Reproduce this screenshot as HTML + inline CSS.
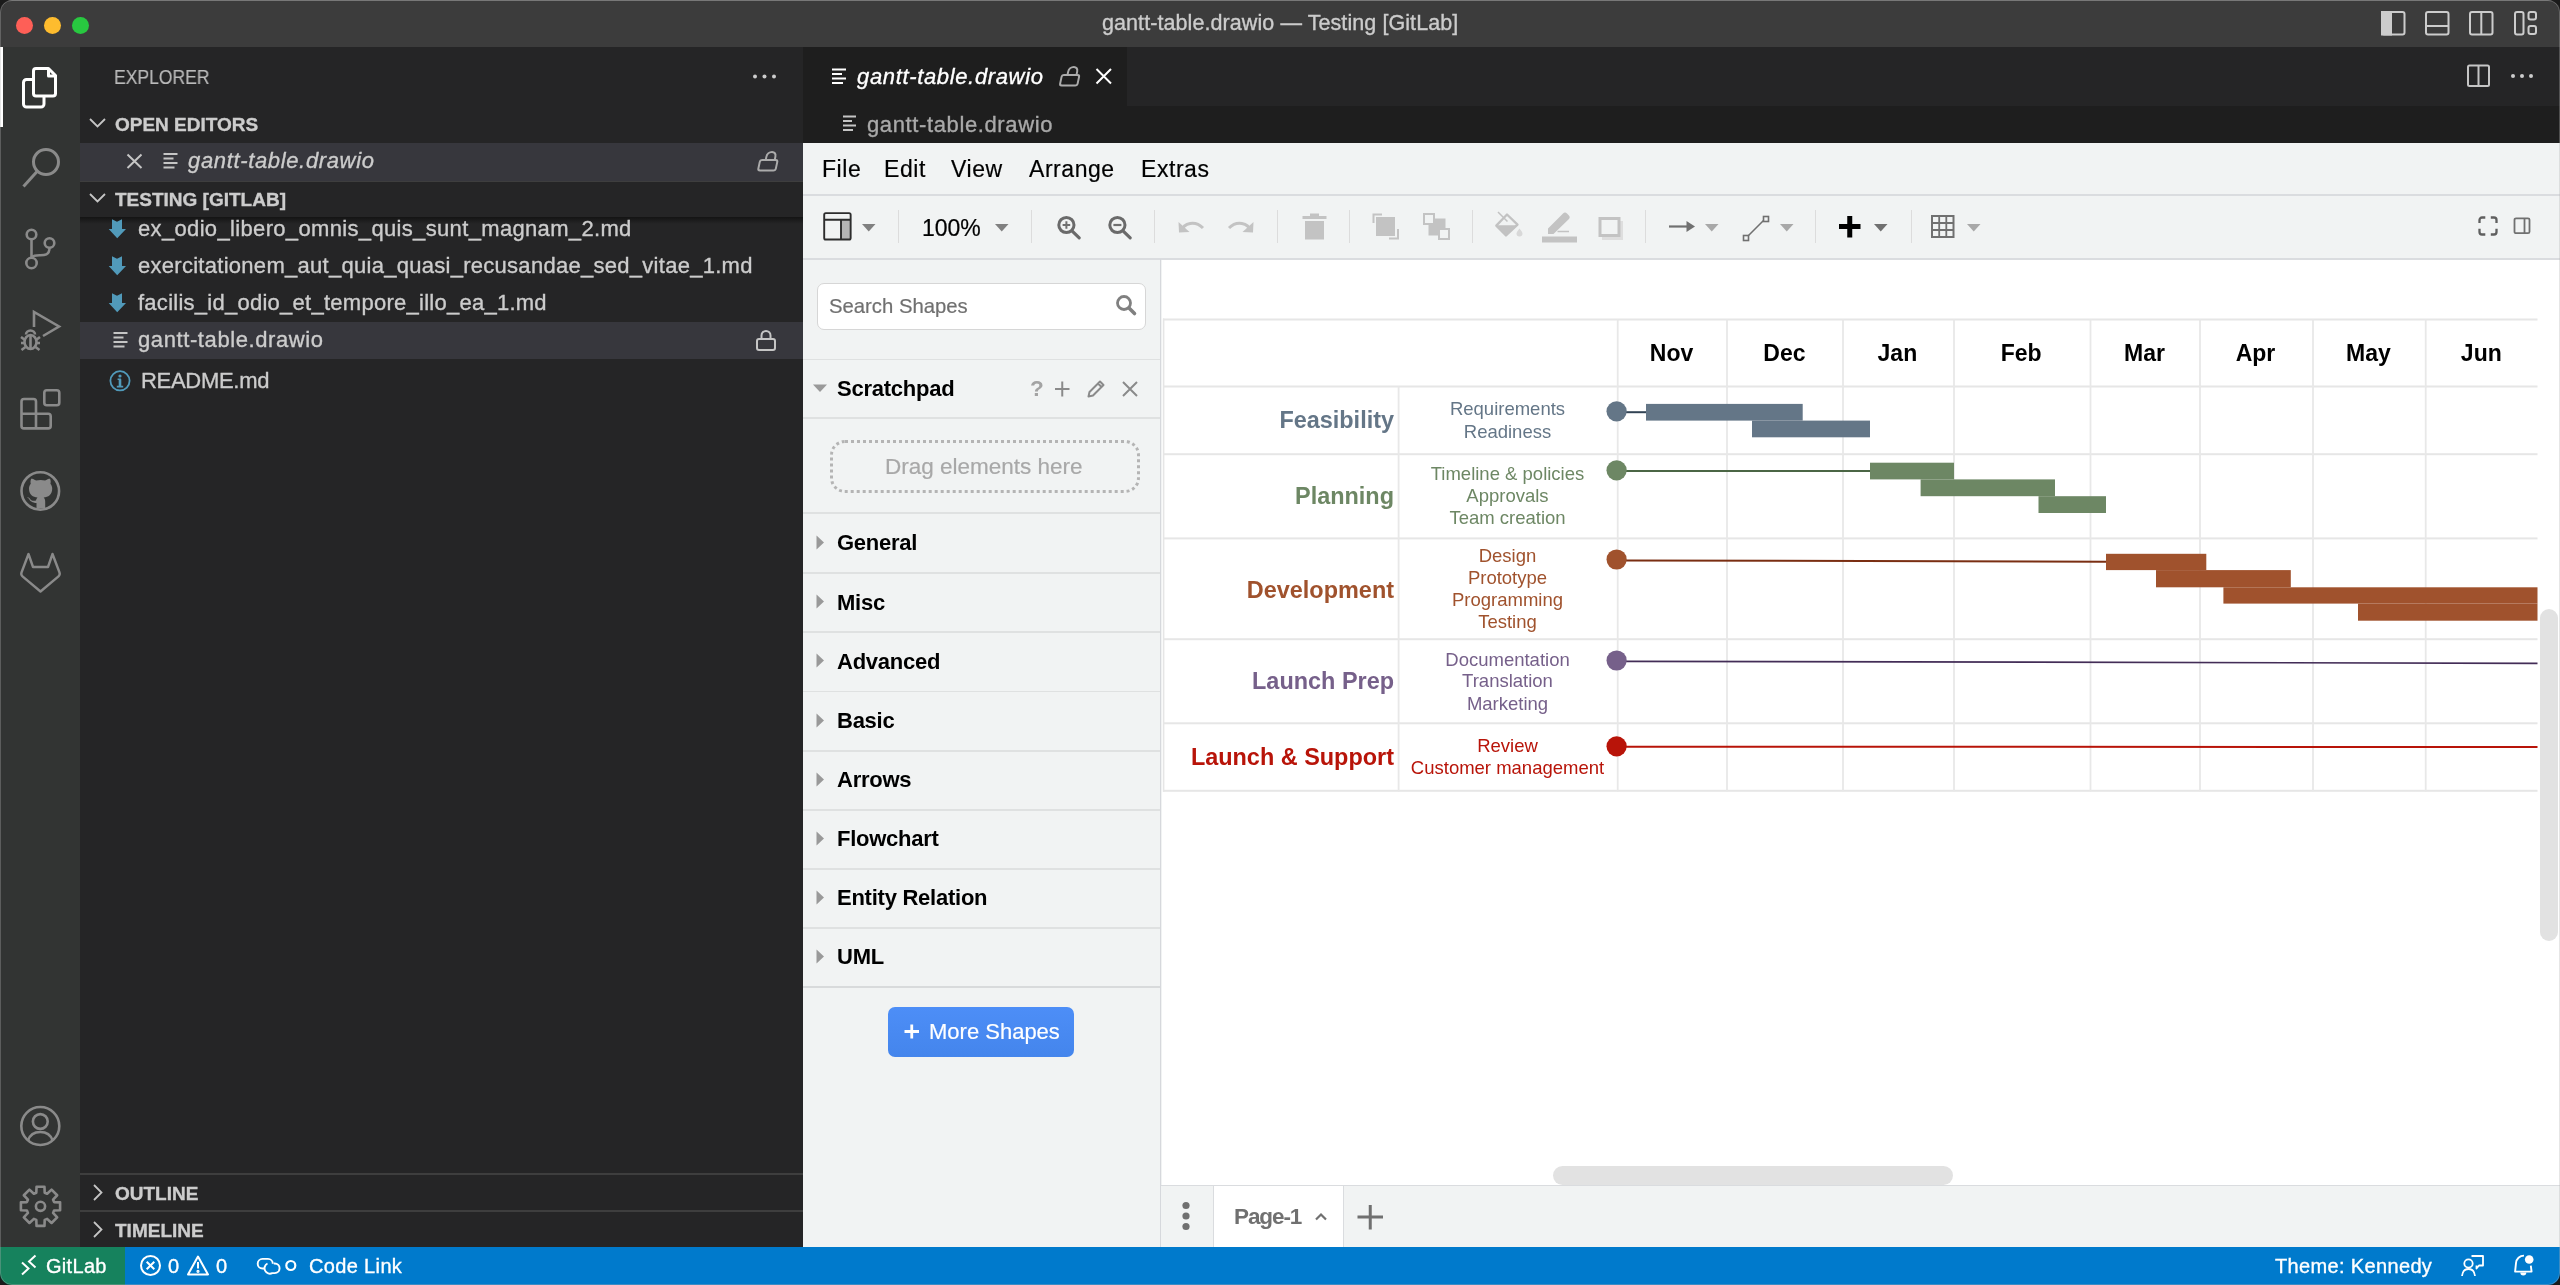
<!DOCTYPE html>
<html><head><meta charset="utf-8">
<style>
*{box-sizing:border-box;margin:0;padding:0}
html,body{width:2560px;height:1285px;overflow:hidden;background:#1b1b1b}
body{font-family:"Liberation Sans",sans-serif;position:relative}
.a{position:absolute}
.t{position:absolute;white-space:pre;line-height:1;will-change:transform}
.d .t:not(.k){-webkit-text-stroke:0.35px currentColor}
.d .t.k{-webkit-text-stroke:0.2px currentColor}
.d .t.k.b{-webkit-text-stroke:0}
svg text{-webkit-text-stroke:0.3px currentColor}
svg{position:absolute;overflow:visible}
</style></head><body>
<!-- window -->
<div class="a d" id="win" style="left:0;top:0;width:2560px;height:1285px;border-radius:12px;overflow:hidden;background:#252526">

<!-- title bar -->
<div class="a" style="left:0;top:0;width:2560px;height:47px;background:#3c3c3c;border-top:1px solid #5c5c5c"></div>
<div class="a" style="left:15.5px;top:16.5px;width:17px;height:17px;border-radius:50%;background:#fe5f57"></div>
<div class="a" style="left:43.5px;top:16.5px;width:17px;height:17px;border-radius:50%;background:#febc2e"></div>
<div class="a" style="left:71.5px;top:16.5px;width:17px;height:17px;border-radius:50%;background:#28c840"></div>
<div class="t" style="left:1102px;top:13.3px;font-size:21.5px;color:#cccccc;letter-spacing:0.08px">gantt-table.drawio — Testing [GitLab]</div>
<svg style="left:2375px;top:5px" width="36" height="36" fill="none" stroke="#cccccc" stroke-width="2"><rect x="7" y="7" width="22.5" height="22.5" rx="2"/><rect x="7" y="7" width="9" height="22.5" fill="#cccccc"/></svg>
<svg style="left:2419px;top:5px" width="36" height="36" fill="none" stroke="#cccccc" stroke-width="2"><rect x="7" y="7" width="22.5" height="22.5" rx="2"/><path d="M7 21 h22.5"/></svg>
<svg style="left:2463px;top:5px" width="36" height="36" fill="none" stroke="#cccccc" stroke-width="2"><rect x="7" y="7" width="22.5" height="22.5" rx="2"/><path d="M18.3 7 v22.5"/></svg>
<svg style="left:2507px;top:5px" width="36" height="36" fill="none" stroke="#cccccc" stroke-width="2"><rect x="8" y="7" width="8.5" height="22.5" rx="2"/><rect x="21.5" y="7" width="7.5" height="7.5" rx="2"/><rect x="21.5" y="21" width="7.5" height="8" rx="2"/></svg>


<!-- activity bar -->
<div class="a" style="left:0;top:47px;width:80px;height:1200px;background:#323433"></div>
<div class="a" style="left:0;top:47px;width:3px;height:80px;background:#ffffff"></div>
<svg style="left:0;top:47px" width="80" height="80" fill="none" stroke="#ffffff" stroke-width="3" stroke-linejoin="round">
<path d="M33.5 24 a2.5 2.5 0 0 1 2.5 -2.5 h12.5 l7 7 v18 a2.5 2.5 0 0 1 -2.5 2.5 h-17 a2.5 2.5 0 0 1 -2.5 -2.5 z"/>
<path d="M48.5 21.5 v7.5 h7" />
<path d="M33 32.5 h-6.5 a3 3 0 0 0 -3 3 v21.5 a3 3 0 0 0 3 3 h14.5 a3 3 0 0 0 3 -3 v-7.5"/>
</svg>
<svg style="left:0;top:127px" width="80" height="80" fill="none" stroke="#8a8a8a" stroke-width="3">
<circle cx="46" cy="35" r="12.5"/><path d="M37.5 44 L23.5 59.5"/>
</svg>
<svg style="left:0;top:207px" width="80" height="80" fill="none" stroke="#8a8a8a" stroke-width="2.6">
<circle cx="31.5" cy="27.5" r="4.8"/><circle cx="49.5" cy="36" r="4.8"/><circle cx="31.5" cy="56" r="5.2"/>
<path d="M31.5 32.3 V50.8"/><path d="M49.5 40.8 c0 8 -6 7.5 -10 7.5 c-4 0 -8 1 -8 3"/>
</svg>
<svg style="left:0;top:287px" width="80" height="80" fill="none" stroke="#8a8a8a" stroke-width="2.6" stroke-linejoin="miter">
<path d="M34 40 V25 L59 39.5 L43 49"/>
<ellipse cx="30.5" cy="55" rx="6" ry="7"/><path d="M26 47.5 a4.5 4 0 0 1 9 0"/>
<path d="M21 50 l4 3 M21 56 h3.5 M21.5 63 l4 -3 M40 50 l-4 3 M40 56 h-3.5 M39.5 63 l-4 -3 M30.5 49 v13"/>
</svg>
<svg style="left:0;top:367px" width="80" height="80" fill="none" stroke="#8a8a8a" stroke-width="2.6" stroke-linejoin="round">
<path d="M24 32 h9.5 a2.5 2.5 0 0 1 2.5 2.5 v12.2 h12.2 a2.5 2.5 0 0 1 2.5 2.5 v9.7 a2.5 2.5 0 0 1 -2.5 2.5 h-24.2 a2.5 2.5 0 0 1 -2.5 -2.5 v-24.4 a2.5 2.5 0 0 1 2.5 -2.5 z M21.5 46.7 h14.5 v14.7"/>
<rect x="44.3" y="23.3" width="15" height="15" rx="2.5"/>
</svg>
<svg style="left:0;top:447px" width="80" height="80">
<circle cx="40.3" cy="44" r="18.8" fill="none" stroke="#8a8a8a" stroke-width="2.6"/>
<path fill="#8a8a8a" d="M36.5 62 v-6 c-4 0 -6.5 -2.5 -6.5 -2.5 c-1 -2.5 -3 -3 -3 -3 c1 -0.5 2.5 0.5 3.5 2 c1 1.5 3.5 1.5 5.5 1 c0.2 -1.5 1 -2.5 1.5 -3 c-4.5 -0.5 -8.5 -2.5 -8.5 -9 c0 -2 0.7 -3.5 1.8 -4.8 c-0.3 -0.8 -0.6 -2.6 0.3 -5 c0 0 1.6 -0.5 5 1.8 c1.5 -0.4 3 -0.6 4.5 -0.6 c1.5 0 3 0.2 4.5 0.6 c3.4 -2.3 5 -1.8 5 -1.8 c0.9 2.4 0.6 4.2 0.3 5 c1.1 1.3 1.8 2.8 1.8 4.8 c0 6.5 -4 8.5 -8.5 9 c0.8 0.7 1.5 2 1.5 4 v6.5 z"/>
</svg>
<svg style="left:0;top:527px" width="80" height="80" fill="none" stroke="#8a8a8a" stroke-width="2.4" stroke-linejoin="round">
<path d="M28.5 27 L33 40 H48 L52.5 27 L59.5 45.5 a3.5 3.5 0 0 1 -1 3.8 L40.5 64.5 L22.5 49.3 a3.5 3.5 0 0 1 -1 -3.8 Z"/>
</svg>
<svg style="left:0;top:1086px" width="80" height="80" fill="none" stroke="#8a8a8a" stroke-width="2.6">
<circle cx="40.3" cy="40" r="19"/><circle cx="40.3" cy="35.5" r="7.4"/><path d="M28 54.5 c2 -6 6.5 -8.5 12.3 -8.5 c5.8 0 10.3 2.5 12.3 8.5"/>
</svg>
<svg style="left:0;top:1166px" width="80" height="80" fill="none" stroke="#8a8a8a" stroke-width="2.6" stroke-linejoin="round"><path d="M36.30 26.73 L36.53 20.70 L44.47 20.70 L44.70 26.73 L47.13 27.74 L51.55 23.63 L57.17 29.25 L53.06 33.67 L54.07 36.10 L60.10 36.33 L60.10 44.27 L54.07 44.50 L53.06 46.93 L57.17 51.35 L51.55 56.97 L47.13 52.86 L44.70 53.87 L44.47 59.90 L36.53 59.90 L36.30 53.87 L33.87 52.86 L29.45 56.97 L23.83 51.35 L27.94 46.93 L26.93 44.50 L20.90 44.27 L20.90 36.33 L26.93 36.10 L27.94 33.67 L23.83 29.25 L29.45 23.63 L33.87 27.74 Z"/><circle cx="40.5" cy="40.3" r="4.6"/></svg>


<!-- sidebar -->
<div class="a" style="left:80px;top:47px;width:723px;height:1200px;background:#252526"></div>
<div class="t" style="left:113.5px;top:68px;font-size:19.5px;color:#bbbbbb;transform:scaleX(0.9);transform-origin:0 0;-webkit-text-stroke:0.15px #bbb">EXPLORER</div>
<svg style="left:750px;top:70px" width="30" height="12"><circle cx="5" cy="6.5" r="2" fill="#cccccc"/><circle cx="14.5" cy="6.5" r="2" fill="#cccccc"/><circle cx="24" cy="6.5" r="2" fill="#cccccc"/></svg>
<!-- open editors header -->
<svg style="left:80px;top:105px" width="40" height="30" fill="none" stroke="#c5c5c5" stroke-width="1.8"><path d="M10 14 L17.5 21.5 L25 14"/></svg>
<div class="t" style="left:114.5px;top:115.2px;font-size:19px;font-weight:bold;color:#cccccc">OPEN EDITORS</div>
<div class="a" style="left:80px;top:143px;width:723px;height:38px;background:#37373d"></div>
<svg style="left:120px;top:148px" width="30" height="30" fill="none" stroke="#c5c5c5" stroke-width="2"><path d="M7.5 6.5 L21.5 20 M21.5 6.5 L7.5 20"/></svg>
<svg style="left:160px;top:150px" width="24" height="24" fill="none" stroke="#c5c5c5" stroke-width="2"><path d="M3.5 4 h14 M3.5 8.5 h10 M3.5 13 h14 M3.5 17.5 h11"/></svg>
<div class="t" style="left:188px;top:150.3px;font-size:22px;font-style:italic;color:#cccccc;letter-spacing:0.65px">gantt-table.drawio</div>
<svg style="left:750px;top:146px" width="34" height="30" fill="none" stroke="#ababab" stroke-width="2"><g transform="translate(4.15,0) skewX(-12)"><rect x="9" y="14" width="17.5" height="10.5" rx="2"/><path d="M14.5 14 v-3.3 a4.5 4.8 0 0 1 9 0 v3.3"/></g></svg>
<div class="a" style="left:80px;top:181px;width:723px;height:1px;background:#3e3e3e"></div>
<!-- testing header -->
<svg style="left:80px;top:180px" width="40" height="30" fill="none" stroke="#c5c5c5" stroke-width="1.8"><path d="M10 14 L17.5 21.5 L25 14"/></svg>
<div class="t" style="left:114.5px;top:190px;font-size:19px;font-weight:bold;color:#cccccc">TESTING [GITLAB]</div>
<div class="a" style="left:80px;top:217px;width:723px;height:7px;background:linear-gradient(#141414,rgba(37,37,38,0))"></div>
<!-- tree rows -->
<svg style="left:100px;top:214px" width="30" height="30"><path fill="#519aba" d="M12 5.2 L17 7.8 L22 5.2 V15 H26 L17.2 24.3 L8.7 15 H12 Z"/></svg>
<div class="t" style="left:137.5px;top:218px;font-size:22px;color:#cccccc;letter-spacing:0.34px">ex_odio_libero_omnis_quis_sunt_magnam_2.md</div>
<svg style="left:100px;top:251px" width="30" height="30"><path fill="#519aba" d="M12 5.2 L17 7.8 L22 5.2 V15 H26 L17.2 24.3 L8.7 15 H12 Z"/></svg>
<div class="t" style="left:137.5px;top:255px;font-size:22px;color:#cccccc;letter-spacing:0.28px">exercitationem_aut_quia_quasi_recusandae_sed_vitae_1.md</div>
<svg style="left:100px;top:288px" width="30" height="30"><path fill="#519aba" d="M12 5.2 L17 7.8 L22 5.2 V15 H26 L17.2 24.3 L8.7 15 H12 Z"/></svg>
<div class="t" style="left:137.5px;top:292px;font-size:22px;color:#cccccc;letter-spacing:0.26px">facilis_id_odio_et_tempore_illo_ea_1.md</div>
<div class="a" style="left:80px;top:322px;width:723px;height:37px;background:#37373d"></div>
<svg style="left:108px;top:328px" width="24" height="24" fill="none" stroke="#c5c5c5" stroke-width="2"><path d="M5.5 5 h14 M5.5 9.5 h10 M5.5 14 h14 M5.5 18.5 h11"/></svg>
<div class="t" style="left:137.5px;top:329px;font-size:22px;color:#cccccc;letter-spacing:0.6px">gantt-table.drawio</div>
<svg style="left:748px;top:325px" width="34" height="30" fill="none" stroke="#c5c5c5" stroke-width="2"><rect x="9" y="14" width="18" height="11" rx="2"/><path d="M13.5 14 v-3.5 a4.5 4.5 0 0 1 9 0 v3.5"/></svg>
<svg style="left:105px;top:366px" width="30" height="30" fill="none" stroke="#519aba" stroke-width="1.8"><circle cx="15" cy="14.8" r="9.6"/><path d="M15 13.2 v7.3" stroke-width="2.6"/><path d="M11.8 20.6 h6.4 M12.6 13.2 h3.4" stroke-width="1.6"/><circle cx="15" cy="10" r="1.6" fill="#519aba" stroke="none"/></svg>
<div class="t" style="left:141px;top:370.4px;font-size:22px;color:#cccccc;letter-spacing:-0.3px">README.md</div>
<!-- bottom panes -->
<div class="a" style="left:80px;top:1173px;width:723px;height:1.5px;background:#3e3e3e"></div>
<svg style="left:80px;top:1178px" width="40" height="30" fill="none" stroke="#c5c5c5" stroke-width="1.8"><path d="M14 7 L21.5 14.5 L14 22"/></svg>
<div class="t" style="left:114.5px;top:1184px;font-size:19px;font-weight:bold;color:#cccccc">OUTLINE</div>
<div class="a" style="left:80px;top:1210px;width:723px;height:1.5px;background:#3e3e3e"></div>
<svg style="left:80px;top:1215px" width="40" height="30" fill="none" stroke="#c5c5c5" stroke-width="1.8"><path d="M14 7 L21.5 14.5 L14 22"/></svg>
<div class="t" style="left:114.5px;top:1221px;font-size:19px;font-weight:bold;color:#cccccc">TIMELINE</div>


<!-- editor tabs -->
<div class="a" style="left:803px;top:47px;width:1757px;height:59px;background:#252526"></div>
<div class="a" style="left:803px;top:47px;width:324px;height:59px;background:#1e1e1e"></div>
<div class="a" style="left:803px;top:106px;width:1757px;height:37px;background:#1e1e1e"></div>
<svg style="left:826px;top:64px" width="24" height="24" fill="none" stroke="#ffffff" stroke-width="2"><path d="M6 5.5 h14 M6 10 h10 M6 14.5 h14 M6 19 h11"/></svg>
<div class="t" style="left:856.5px;top:65.7px;font-size:22px;font-style:italic;color:#ffffff;letter-spacing:0.65px">gantt-table.drawio</div>
<svg style="left:1052px;top:60px" width="34" height="30" fill="none" stroke="#ababab" stroke-width="2"><g transform="translate(4.15,0) skewX(-12)"><rect x="9" y="15" width="17.5" height="10.5" rx="2"/><path d="M14.5 15 v-3.3 a4.5 4.8 0 0 1 9 0 v3.3"/></g></svg>
<svg style="left:1088px;top:61px" width="30" height="30" fill="none" stroke="#ffffff" stroke-width="2"><path d="M8.5 8 L23 22.5 M23 8 L8.5 22.5"/></svg>
<svg style="left:2460px;top:60px" width="36" height="32" fill="none" stroke="#c5c5c5" stroke-width="2"><rect x="8" y="5.5" width="21" height="20.5" rx="1.5"/><path d="M18.5 5.5 v20.5"/></svg>
<svg style="left:2505px;top:70px" width="34" height="12"><circle cx="8" cy="6" r="2" fill="#cccccc"/><circle cx="17" cy="6" r="2" fill="#cccccc"/><circle cx="26" cy="6" r="2" fill="#cccccc"/></svg>
<!-- breadcrumbs -->
<svg style="left:837px;top:111px" width="24" height="24" fill="none" stroke="#c5c5c5" stroke-width="2"><path d="M6 5.5 h13 M6 10 h9 M6 14.5 h13 M6 19 h10"/></svg>
<div class="t" style="left:867px;top:113.7px;font-size:22px;color:#a9a9a9;letter-spacing:0.62px">gantt-table.drawio</div>


<!-- drawio -->
<div class="a" style="left:803px;top:143px;width:1757px;height:1104px;background:#f1f3f3"></div>
<div class="a" style="left:803px;top:194px;width:1757px;height:1.5px;background:#dadcdf"></div>
<div class="t k" style="left:821.5px;top:157.5px;font-size:23px;color:#000;letter-spacing:0.55px">File</div>
<div class="t k" style="left:884px;top:157.5px;font-size:23px;color:#000;letter-spacing:0.55px">Edit</div>
<div class="t k" style="left:951px;top:157.5px;font-size:23px;color:#000;letter-spacing:0.55px">View</div>
<div class="t k" style="left:1029px;top:157.5px;font-size:23px;color:#000;letter-spacing:0.55px">Arrange</div>
<div class="t k" style="left:1141px;top:157.5px;font-size:23px;color:#000;letter-spacing:0.55px">Extras</div>
<div class="a" style="left:803px;top:258px;width:1757px;height:1.5px;background:#dadcdf"></div>
<div class="a" style="left:897.5px;top:210px;width:1px;height:33px;background:#dcdcdc"></div>
<div class="a" style="left:1030.5px;top:210px;width:1px;height:33px;background:#dcdcdc"></div>
<div class="a" style="left:1153.5px;top:210px;width:1px;height:33px;background:#dcdcdc"></div>
<div class="a" style="left:1276.5px;top:210px;width:1px;height:33px;background:#dcdcdc"></div>
<div class="a" style="left:1348.5px;top:210px;width:1px;height:33px;background:#dcdcdc"></div>
<div class="a" style="left:1471.5px;top:210px;width:1px;height:33px;background:#dcdcdc"></div>
<div class="a" style="left:1644.5px;top:210px;width:1px;height:33px;background:#dcdcdc"></div>
<div class="a" style="left:1814.5px;top:210px;width:1px;height:33px;background:#dcdcdc"></div>
<div class="a" style="left:1910.5px;top:210px;width:1px;height:33px;background:#dcdcdc"></div>
<svg style="left:820px;top:209px" width="36" height="36"><rect x="21" y="10.8" width="9.6" height="19.7" fill="#b5b5b5"/><rect x="4.2" y="4.15" width="26.45" height="26.4" rx="1.6" fill="none" stroke="#2d2d2d" stroke-width="1.9"/><path d="M4.2 10.8 H30.65 M21 10.8 V30.55" stroke="#2d2d2d" stroke-width="1.9"/></svg>
<svg style="left:861px;top:223px" width="16" height="10"><path d="M1 1 h13.5 l-6.75 7.5 z" fill="#808080"/></svg>
<div class="t k" style="left:921.5px;top:216.8px;font-size:23px;color:#000">100%</div>
<svg style="left:994px;top:223px" width="16" height="10"><path d="M1 1 h13.5 l-6.75 7.5 z" fill="#808080"/></svg>
<svg style="left:1054px;top:213px" width="30" height="30"><circle cx="12.4" cy="12" r="7.6" fill="none" stroke="#6a6a6a" stroke-width="3"/><path d="M12.4 8.2 v7.6 M8.6 12 h7.6" stroke="#707070" stroke-width="2"/><path d="M18 17.8 L25.2 24.8" stroke="#6a6a6a" stroke-width="3.2" stroke-linecap="round"/></svg>
<svg style="left:1105px;top:213px" width="30" height="30"><circle cx="12.4" cy="12" r="7.6" fill="none" stroke="#6a6a6a" stroke-width="3"/><path d="M8.4 12 h8" stroke="#707070" stroke-width="2.2"/><path d="M18 17.8 L25.2 24.8" stroke="#6a6a6a" stroke-width="3.2" stroke-linecap="round"/></svg>
<svg style="left:1175px;top:214px" width="32" height="24"><path d="M6 17 C9 9 20 6 28 14" fill="none" stroke="#c3c3c3" stroke-width="3"/><path d="M3.5 8 L4 18.5 L14.5 18 z" fill="#c3c3c3"/></svg>
<svg style="left:1225px;top:214px" width="32" height="24"><path d="M26 17 C23 9 12 6 4 14" fill="none" stroke="#c3c3c3" stroke-width="3"/><path d="M28.5 8 L28 18.5 L17.5 18 z" fill="#c3c3c3"/></svg>
<svg style="left:1300px;top:211px" width="30" height="30"><path d="M2.5 5 h24 v3 h-24 z M10 2.5 h9 v3 h-9 z M5 10 h19 v18.5 h-19 z" fill="#c3c3c3"/></svg>
<svg style="left:1370px;top:211px" width="32" height="32"><path d="M3.5 12 V3.5 H12" fill="none" stroke="#c3c3c3" stroke-width="2"/><path d="M28 18 V27.5 H19" fill="none" stroke="#c3c3c3" stroke-width="2"/><rect x="6" y="6" width="19" height="19" fill="#c3c3c3"/></svg>
<svg style="left:1421px;top:211px" width="32" height="32"><rect x="7.5" y="7.5" width="17" height="17" fill="#c3c3c3"/><rect x="3" y="3" width="10" height="10" fill="#f1f3f3" stroke="#c3c3c3" stroke-width="2"/><rect x="18" y="18" width="10" height="10" fill="#f1f3f3" stroke="#c3c3c3" stroke-width="2"/></svg>
<svg style="left:1493px;top:209px" width="34" height="32"><path d="M14 5.5 L24.5 15.6 L13 26.5 L3.3 16.6 Z" fill="none" stroke="#c2c2c2" stroke-width="2.3" stroke-linejoin="round"/><path d="M3.5 16.2 H24.2 L13 26.5 Z" fill="#c2c2c2"/><path d="M5 3 L14.5 12.5" stroke="#c2c2c2" stroke-width="1.5"/><path d="M26.5 19.5 q-3 3.5 -3 5 a3 3 0 0 0 6 0 q0 -1.5 -3 -5z" fill="#d8d8d8"/></svg>
<svg style="left:1540px;top:209px" width="40" height="36"><path d="M8 19.5 L23 4.5 a2.8 2.8 0 0 1 4 0 l1.7 1.7 a2.8 2.8 0 0 1 0 4 L13.5 25 H8 z" fill="#c3c3c3"/><path d="M17.5 22.5 H29" stroke="#c3c3c3" stroke-width="1.5"/><rect x="2" y="27.5" width="35" height="6" fill="#c3c3c3"/></svg>
<svg style="left:1596px;top:214px" width="32" height="30"><rect x="6" y="7" width="21" height="19" fill="#dedede"/><rect x="4" y="4.5" width="19" height="17" fill="#f1f3f3" stroke="#c3c3c3" stroke-width="3"/></svg>
<svg style="left:1667px;top:218px" width="32" height="18"><path d="M2 8.5 H21" stroke="#707070" stroke-width="2.2"/><path d="M19.5 3 L28 8.5 L19.5 14 z" fill="#707070"/></svg>
<svg style="left:1704px;top:223px" width="16" height="10"><path d="M1 1 h13.5 l-6.75 7.5 z" fill="#a8a8a8"/></svg>
<svg style="left:1740px;top:213px" width="32" height="32"><path d="M6.5 24.5 L25 6" stroke="#707070" stroke-width="1.6"/><rect x="3.5" y="22.5" width="5" height="5" fill="#f1f3f3" stroke="#707070" stroke-width="1.6"/><rect x="23.5" y="3.5" width="5" height="5" fill="#f1f3f3" stroke="#707070" stroke-width="1.6"/></svg>
<svg style="left:1779px;top:223px" width="16" height="10"><path d="M1 1 h13.5 l-6.75 7.5 z" fill="#a8a8a8"/></svg>
<svg style="left:1836px;top:213px" width="28" height="28"><path d="M3 13.5 H24.5 M13.75 3 V24.5" stroke="#000" stroke-width="5"/></svg>
<svg style="left:1873px;top:223px" width="16" height="10"><path d="M1 1 h13.5 l-6.75 7.5 z" fill="#707070"/></svg>
<svg style="left:1928px;top:212px" width="30" height="30"><rect x="4" y="4" width="21.5" height="21" fill="none" stroke="#707070" stroke-width="2"/><path d="M11.2 4 V25 M18.3 4 V25 M4 11 H25.5 M4 18 H25.5" stroke="#707070" stroke-width="1.8"/></svg>
<svg style="left:1966px;top:223px" width="16" height="10"><path d="M1 1 h13.5 l-6.75 7.5 z" fill="#a8a8a8"/></svg>
<svg style="left:2474px;top:212px" width="30" height="30" fill="none" stroke="#5f5f5f" stroke-width="2.3"><path d="M5.5 11 V8 a2.5 2.5 0 0 1 2.5 -2.5 H11.3 M16.8 5.5 H20 a2.5 2.5 0 0 1 2.5 2.5 V11 M22.5 16.8 V20 a2.5 2.5 0 0 1 -2.5 2.5 H16.8 M11.3 22.5 H8 a2.5 2.5 0 0 1 -2.5 -2.5 V16.8"/></svg>
<svg style="left:2510px;top:213px" width="26" height="26" fill="none" stroke="#707070" stroke-width="1.8"><rect x="4.5" y="5.3" width="15" height="14.9" rx="1.5"/><path d="M14.5 5.3 V20.2"/></svg>
<div class="a" style="left:1160.2px;top:259px;width:1.1px;height:988px;background:#d6d8dc"></div>
<div class="a" style="left:817px;top:283px;width:329px;height:46.5px;background:#fff;border:1.5px solid #d6d6d6;border-radius:7px"></div>
<div class="t k" style="left:828.5px;top:296.0px;font-size:20.3px;color:#707070">Search Shapes</div>
<svg style="left:1113px;top:292px" width="28" height="28"><circle cx="11" cy="11" r="6.5" fill="none" stroke="#808080" stroke-width="2.8"/><path d="M16 16 L21.5 21.5" stroke="#808080" stroke-width="3.6" stroke-linecap="round"/></svg>
<div class="a" style="left:803px;top:358.75px;width:357px;height:1.5px;background:#dfe1e1"></div>
<div class="a" style="left:803px;top:417.25px;width:357px;height:1.5px;background:#dfe1e1"></div>
<div class="a" style="left:803px;top:512.25px;width:357px;height:1.5px;background:#dfe1e1"></div>
<div class="a" style="left:803px;top:572.05px;width:357px;height:1.5px;background:#dfe1e1"></div>
<div class="a" style="left:803px;top:631.45px;width:357px;height:1.5px;background:#dfe1e1"></div>
<div class="a" style="left:803px;top:690.65px;width:357px;height:1.5px;background:#dfe1e1"></div>
<div class="a" style="left:803px;top:750.25px;width:357px;height:1.5px;background:#dfe1e1"></div>
<div class="a" style="left:803px;top:809.25px;width:357px;height:1.5px;background:#dfe1e1"></div>
<div class="a" style="left:803px;top:868.25px;width:357px;height:1.5px;background:#dfe1e1"></div>
<div class="a" style="left:803px;top:927.25px;width:357px;height:1.5px;background:#dfe1e1"></div>
<div class="a" style="left:803px;top:986px;width:357px;height:2px;background:#d8dadb"></div>
<svg style="left:810px;top:380px" width="22" height="16"><path d="M3 4.5 h14 l-7 7.5 z" fill="#999"/></svg>
<div class="t k b" style="left:836.5px;top:378.1px;font-size:22px;font-weight:bold;color:#000;letter-spacing:-0.25px">Scratchpad</div>
<div class="t k b" style="left:1029.5px;top:378.1px;font-size:22.5px;font-weight:bold;color:#a3a3a3">?</div>
<svg style="left:1050px;top:377px" width="24" height="24"><path d="M5 12 H19.5 M12.25 4.5 V19.5" stroke="#8a8a8a" stroke-width="2"/></svg>
<svg style="left:1084px;top:377px" width="24" height="24"><path d="M4.5 19.5 L5.5 15 L16 4.5 L19.5 8 L9 18.5 z M14 6.5 L17.5 10" fill="none" stroke="#8a8a8a" stroke-width="2" stroke-linejoin="round"/></svg>
<svg style="left:1118px;top:377px" width="24" height="24"><path d="M5 5 L19 19 M19 5 L5 19" stroke="#8a8a8a" stroke-width="2"/></svg>
<div class="a" style="left:829.5px;top:439.5px;width:310.5px;height:53px;border:3px dotted #b4b4b4;border-radius:15px"></div>
<div class="t k" style="left:885px;top:455.6px;font-size:22.5px;color:#a8a8a8">Drag elements here</div>
<svg style="left:810px;top:531.0px" width="20" height="22"><path d="M6.5 4.5 v14 l7.5 -7 z" fill="#999"/></svg>
<div class="t k b" style="left:836.5px;top:532.4px;font-size:22px;font-weight:bold;color:#000;letter-spacing:-0.25px">General</div>
<svg style="left:810px;top:590.1px" width="20" height="22"><path d="M6.5 4.5 v14 l7.5 -7 z" fill="#999"/></svg>
<div class="t k b" style="left:836.5px;top:591.5px;font-size:22px;font-weight:bold;color:#000;letter-spacing:-0.25px">Misc</div>
<svg style="left:810px;top:649.3px" width="20" height="22"><path d="M6.5 4.5 v14 l7.5 -7 z" fill="#999"/></svg>
<div class="t k b" style="left:836.5px;top:650.7px;font-size:22px;font-weight:bold;color:#000;letter-spacing:-0.25px">Advanced</div>
<svg style="left:810px;top:708.5px" width="20" height="22"><path d="M6.5 4.5 v14 l7.5 -7 z" fill="#999"/></svg>
<div class="t k b" style="left:836.5px;top:709.8px;font-size:22px;font-weight:bold;color:#000;letter-spacing:-0.25px">Basic</div>
<svg style="left:810px;top:767.6px" width="20" height="22"><path d="M6.5 4.5 v14 l7.5 -7 z" fill="#999"/></svg>
<div class="t k b" style="left:836.5px;top:769.0px;font-size:22px;font-weight:bold;color:#000;letter-spacing:-0.25px">Arrows</div>
<svg style="left:810px;top:826.8px" width="20" height="22"><path d="M6.5 4.5 v14 l7.5 -7 z" fill="#999"/></svg>
<div class="t k b" style="left:836.5px;top:828.1px;font-size:22px;font-weight:bold;color:#000;letter-spacing:-0.25px">Flowchart</div>
<svg style="left:810px;top:885.9px" width="20" height="22"><path d="M6.5 4.5 v14 l7.5 -7 z" fill="#999"/></svg>
<div class="t k b" style="left:836.5px;top:887.3px;font-size:22px;font-weight:bold;color:#000;letter-spacing:-0.25px">Entity Relation</div>
<svg style="left:810px;top:945.0px" width="20" height="22"><path d="M6.5 4.5 v14 l7.5 -7 z" fill="#999"/></svg>
<div class="t k b" style="left:836.5px;top:946.4px;font-size:22px;font-weight:bold;color:#000;letter-spacing:-0.25px">UML</div>
<div class="a" style="left:888px;top:1007px;width:186px;height:49.5px;border-radius:7px;background:linear-gradient(#4d8ef7,#4485ec);"></div>
<svg style="left:900px;top:1020px" width="24" height="24"><path d="M4.5 11.5 H19 M11.75 4.5 V18.5" stroke="#fff" stroke-width="2.8"/></svg>
<div class="t k" style="left:929px;top:1020.6px;font-size:22px;color:#fff">More Shapes</div>
<div class="a" style="left:1161.5px;top:259.5px;width:1398.5px;height:925.5px;background:#ffffff"></div>
<svg style="left:0;top:0" width="2560" height="1285" font-family="Liberation Sans">
<rect x="1163" y="318.5" width="1374.5" height="2" fill="#e6e6e6"/>
<rect x="1163" y="385.5" width="1374.5" height="2" fill="#e6e6e6"/>
<rect x="1163" y="453.2" width="1374.5" height="2" fill="#e6e6e6"/>
<rect x="1163" y="537.4" width="1374.5" height="2" fill="#e6e6e6"/>
<rect x="1163" y="638.2" width="1374.5" height="2" fill="#e6e6e6"/>
<rect x="1163" y="722.3" width="1374.5" height="2" fill="#e6e6e6"/>
<rect x="1163" y="789.8" width="1374.5" height="2" fill="#e6e6e6"/>
<rect x="1162.8" y="318.5" width="1.6" height="473.3" fill="#e6e6e6"/>
<rect x="1397.7" y="386.5" width="1.8" height="405" fill="#e8e8e8"/>
<rect x="1616.8" y="319.5" width="1.8" height="472" fill="#e8e8e8"/>
<rect x="1726.1" y="319.5" width="1.8" height="472" fill="#e8e8e8"/>
<rect x="1842.1" y="319.5" width="1.8" height="472" fill="#e8e8e8"/>
<rect x="1953.1" y="319.5" width="1.8" height="472" fill="#e8e8e8"/>
<rect x="2089.6" y="319.5" width="1.8" height="472" fill="#e8e8e8"/>
<rect x="2199.1" y="319.5" width="1.8" height="472" fill="#e8e8e8"/>
<rect x="2312.1" y="319.5" width="1.8" height="472" fill="#e8e8e8"/>
<rect x="2424.7999999999997" y="319.5" width="1.8" height="472" fill="#e8e8e8"/>
<text x="1671.5" y="361.3" font-size="23" font-weight="bold" text-anchor="middle" fill="#000" style="color:#000">Nov</text>
<text x="1784.4" y="361.3" font-size="23" font-weight="bold" text-anchor="middle" fill="#000" style="color:#000">Dec</text>
<text x="1897.4" y="361.3" font-size="23" font-weight="bold" text-anchor="middle" fill="#000" style="color:#000">Jan</text>
<text x="2021.2" y="361.3" font-size="23" font-weight="bold" text-anchor="middle" fill="#000" style="color:#000">Feb</text>
<text x="2144.5" y="361.3" font-size="23" font-weight="bold" text-anchor="middle" fill="#000" style="color:#000">Mar</text>
<text x="2255.5" y="361.3" font-size="23" font-weight="bold" text-anchor="middle" fill="#000" style="color:#000">Apr</text>
<text x="2368.4" y="361.3" font-size="23" font-weight="bold" text-anchor="middle" fill="#000" style="color:#000">May</text>
<text x="2481.3" y="361.3" font-size="23" font-weight="bold" text-anchor="middle" fill="#000" style="color:#000">Jun</text>
<text x="1394" y="428.2" font-size="23.45" font-weight="bold" text-anchor="end" fill="#647687" style="color:#647687">Feasibility</text>
<text x="1507.5" y="415.3" font-size="18.5" text-anchor="middle" fill="#647687" style="color:#647687">Requirements</text>
<text x="1507.5" y="437.5" font-size="18.5" text-anchor="middle" fill="#647687" style="color:#647687">Readiness</text>
<text x="1394" y="504.4" font-size="23.45" font-weight="bold" text-anchor="end" fill="#6d8764" style="color:#6d8764">Planning</text>
<text x="1507.5" y="480.3" font-size="18.5" text-anchor="middle" fill="#6d8764" style="color:#6d8764">Timeline &amp; policies</text>
<text x="1507.5" y="501.9" font-size="18.5" text-anchor="middle" fill="#6d8764" style="color:#6d8764">Approvals</text>
<text x="1507.5" y="524.3" font-size="18.5" text-anchor="middle" fill="#6d8764" style="color:#6d8764">Team creation</text>
<text x="1394" y="597.8" font-size="23.45" font-weight="bold" text-anchor="end" fill="#a0522d" style="color:#a0522d">Development</text>
<text x="1507.5" y="562.0" font-size="18.5" text-anchor="middle" fill="#a0522d" style="color:#a0522d">Design</text>
<text x="1507.5" y="583.9" font-size="18.5" text-anchor="middle" fill="#a0522d" style="color:#a0522d">Prototype</text>
<text x="1507.5" y="606.0" font-size="18.5" text-anchor="middle" fill="#a0522d" style="color:#a0522d">Programming</text>
<text x="1507.5" y="628.3" font-size="18.5" text-anchor="middle" fill="#a0522d" style="color:#a0522d">Testing</text>
<text x="1394" y="689.3" font-size="23.45" font-weight="bold" text-anchor="end" fill="#76608a" style="color:#76608a">Launch Prep</text>
<text x="1507.5" y="665.8" font-size="18.5" text-anchor="middle" fill="#76608a" style="color:#76608a">Documentation</text>
<text x="1507.5" y="687.4" font-size="18.5" text-anchor="middle" fill="#76608a" style="color:#76608a">Translation</text>
<text x="1507.5" y="709.9" font-size="18.5" text-anchor="middle" fill="#76608a" style="color:#76608a">Marketing</text>
<text x="1394" y="765" font-size="23.45" font-weight="bold" text-anchor="end" fill="#b81409" style="color:#b81409">Launch &amp; Support</text>
<text x="1507.5" y="752.1" font-size="18.5" text-anchor="middle" fill="#b81409" style="color:#b81409">Review</text>
<text x="1507.5" y="774.4" font-size="18.5" text-anchor="middle" fill="#b81409" style="color:#b81409">Customer management</text>
<path d="M1626 412.2 H1646" stroke="#314354" stroke-width="2"/>
<path d="M1626 471.1 H1870" stroke="#4b6645" stroke-width="2"/>
<path d="M1626 560.4 L2106 561.8" stroke="#7a2e12" stroke-width="2"/>
<path d="M1626 661.3 L2537.5 663.3" stroke="#432d57" stroke-width="1.7"/>
<path d="M1626 746.7 L2537.5 747" stroke="#b81409" stroke-width="2"/>
<circle cx="1616.6" cy="411.3" r="10.1" fill="#647687"/>
<circle cx="1616.6" cy="470.3" r="10.1" fill="#6d8764"/>
<circle cx="1616.6" cy="559.5" r="10.1" fill="#a0522d"/>
<circle cx="1616.6" cy="660.5" r="10.1" fill="#76608a"/>
<circle cx="1616.6" cy="746.3" r="10.1" fill="#b81409"/>
<rect x="1646" y="403.9" width="156.7" height="16.7" fill="#647687"/>
<rect x="1752" y="420.6" width="118.0" height="16.7" fill="#647687"/>
<rect x="1870" y="462.7" width="84.0" height="16.7" fill="#6d8764"/>
<rect x="1920.6" y="479.4" width="134.4" height="16.8" fill="#6d8764"/>
<rect x="2038.5" y="496.2" width="67.5" height="16.8" fill="#6d8764"/>
<rect x="2106" y="553.8" width="100.3" height="16.3" fill="#a0522d"/>
<rect x="2156" y="570.1" width="134.8" height="17.2" fill="#a0522d"/>
<rect x="2223.4" y="587.3" width="314.1" height="16.3" fill="#a0522d"/>
<rect x="2358" y="603.6" width="179.5" height="17.1" fill="#a0522d"/>
</svg>
<div class="a" style="left:2540px;top:609px;width:18px;height:332px;border-radius:9px;background:#e2e2e2"></div>
<div class="a" style="left:1553px;top:1165.5px;width:400px;height:19px;border-radius:9.5px;background:#e2e2e2"></div>
<div class="a" style="left:1161px;top:1184.5px;width:1399px;height:1.5px;background:#dadcdf"></div>
<svg style="left:1176px;top:1198px" width="20" height="36"><circle cx="10" cy="7.5" r="3.6" fill="#707070"/><circle cx="10" cy="18" r="3.6" fill="#707070"/><circle cx="10" cy="28.5" r="3.6" fill="#707070"/></svg>
<div class="a" style="left:1212.5px;top:1186px;width:131px;height:61px;background:#fff;border-left:1.5px solid #dadcdf;border-right:1.5px solid #dadcdf"></div>
<div class="t k b" style="left:1234px;top:1205.8px;font-size:22.5px;font-weight:bold;color:#707070;letter-spacing:-1.1px">Page-1</div>
<svg style="left:1312px;top:1209px" width="18" height="16"><path d="M4 10.5 L9 5.5 L14 10.5" fill="none" stroke="#707070" stroke-width="2.2"/></svg>
<svg style="left:1354px;top:1202px" width="32" height="30"><path d="M3.5 15 H29 M16.25 3 V27.5" stroke="#707070" stroke-width="3"/></svg>

<!-- status bar -->
<div class="a" style="left:0;top:1247px;width:2560px;height:38px;background:#007acc"></div>
<div class="a" style="left:0;top:1247px;width:125px;height:38px;background:#16825d"></div>
<svg style="left:15px;top:1250px" width="28" height="32" fill="none" stroke="#ffffff" stroke-width="2"><path d="M7 12.5 L13.5 18.5 L7 24.5 M20.5 5.5 L14 11.5 L20.5 17.5"/></svg>
<div class="t" style="left:46px;top:1255.9px;font-size:20px;color:#ffffff;letter-spacing:0.3px">GitLab</div>
<svg style="left:136px;top:1251px" width="30" height="30" fill="none" stroke="#ffffff" stroke-width="2"><circle cx="14.5" cy="14.5" r="9.5"/><path d="M10.7 10.7 L18.3 18.3 M18.3 10.7 L10.7 18.3"/></svg>
<div class="t" style="left:168px;top:1255.9px;font-size:20px;color:#ffffff">0</div>
<svg style="left:184px;top:1251px" width="30" height="30" fill="none" stroke="#ffffff" stroke-width="2" stroke-linejoin="round"><path d="M14 5.5 L24 23.5 H4 Z"/><path d="M14 11 v6.5" /><circle cx="14" cy="20.3" r="0.6" fill="#fff"/></svg>
<div class="t" style="left:215.5px;top:1255.9px;font-size:20px;color:#ffffff">0</div>
<svg style="left:253px;top:1251px" width="30" height="30" fill="none" stroke="#ffffff" stroke-width="1.9"><path d="M12 17.5 H9.5 a4.8 4.8 0 0 1 0 -9.6 h5.5 a4.8 4.8 0 0 1 4.8 4.8"/><path d="M14.5 12.5 a4.8 4.8 0 0 0 4.8 9.6 h2.5 a4.8 4.8 0 0 0 0 -9.6 h-1"/></svg>
<svg style="left:282px;top:1256px" width="18" height="20" fill="none" stroke="#ffffff" stroke-width="2.2"><circle cx="8.8" cy="9.5" r="4.5"/></svg>
<div class="t" style="left:308.5px;top:1255.9px;font-size:20px;color:#ffffff;letter-spacing:0.35px">Code Link</div>
<div class="t" style="left:2275px;top:1256.3px;font-size:20px;color:#ffffff;letter-spacing:0.35px">Theme: Kennedy</div>
<svg style="left:2457px;top:1250px" width="32" height="32" fill="none" stroke="#ffffff" stroke-width="1.8" stroke-linejoin="round"><circle cx="11.5" cy="13.5" r="4.2"/><path d="M5 26 c0.5 -4.5 3 -7 6.5 -7 c3.5 0 6 2.5 6.5 7"/><path d="M14.5 6 H26 V15.5 H22 L19.5 18.5 V15.5"/></svg>
<svg style="left:2508px;top:1250px" width="32" height="32" fill="none" stroke="#ffffff" stroke-width="1.9" stroke-linejoin="round"><path d="M16 5.6 a8 8 0 0 0 -8 7.5 l-0.9 8.5 H23.6 l-0.8 -6"/><path d="M12.3 22.5 a3 3 0 0 0 6 0 z" fill="#fff" stroke="none"/><circle cx="21.2" cy="9.5" r="4.3" fill="#ffffff" stroke="none"/></svg>


<div class="a" style="left:0;top:0;width:2560px;height:1285px;border-radius:12px;border:1.5px solid rgba(178,178,178,0.33);pointer-events:none"></div>
</div>
</body></html>
